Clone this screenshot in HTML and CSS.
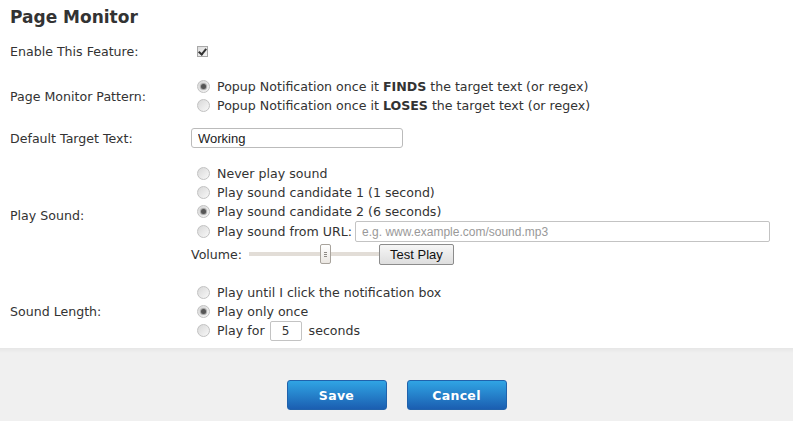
FILE: index.html
```html
<!DOCTYPE html>
<html lang="en">
<head>
<meta charset="UTF-8">
<title>Page Monitor</title>
<link rel="stylesheet" href="styles.css">
</head>
<body>

<div class="page">
    <h1>Page Monitor</h1>

    <div class="options">
        <div class="row">
            <div class="label">Enable This Feature:</div>
            <div class="control">
                <input type="checkbox" class="check" checked>
            </div>
        </div>

        <div class="row">
            <div class="label">Page Monitor Pattern:</div>
            <div class="control">
                <label class="line"><input type="radio" name="pattern" checked>Popup Notification once it <b>FINDS</b> the target text (or regex)</label>
                <label class="line"><input type="radio" name="pattern">Popup Notification once it <b>LOSES</b> the target text (or regex)</label>
            </div>
        </div>

        <div class="row row-tight">
            <div class="label">Default Target Text:</div>
            <div class="control">
                <input type="text" class="target" value="Working">
            </div>
        </div>

        <div class="row row-sound">
            <div class="label">Play Sound:</div>
            <div class="control">
                <label class="line"><input type="radio" name="sound">Never play sound</label>
                <label class="line"><input type="radio" name="sound">Play sound candidate 1 (1 second)</label>
                <label class="line"><input type="radio" name="sound" checked>Play sound candidate 2 (6 seconds)</label>
                <label class="line line-url"><input type="radio" name="sound">Play sound from URL:<input type="text" class="url" placeholder="e.g. www.example.com/sound.mp3"></label>
                <div class="volume">
                    Volume:
                    <input type="range" class="slider" min="0" max="100" value="60">
                    <button type="button" class="test">Test Play</button>
                </div>
            </div>
        </div>

        <div class="row row-last">
            <div class="label">Sound Length:</div>
            <div class="control">
                <label class="line"><input type="radio" name="length">Play until I click the notification box</label>
                <label class="line"><input type="radio" name="length" checked>Play only once</label>
                <label class="line"><input type="radio" name="length">Play for <input type="text" class="secs" value="5"> seconds</label>
            </div>
        </div>
    </div>
</div>

<div class="footer">
    <button type="button" class="blue">Save</button>
    <button type="button" class="blue">Cancel</button>
</div>

</body>
</html>
```

FILE: styles.css
```css
body {
    margin: 0;
    font-family: "DejaVu Sans", Verdana, sans-serif;
    font-size: 12.6px;
    color: #333;
    background-color: #fff;
}

.page {
    padding: 7px 10px 0 10px;
}

h1 {
    font-size: 17px;
    line-height: 21px;
    margin: 0 0 7px 0;
    color: #333;
}

.row {
    display: grid;
    grid-template-columns: 181px 1fr;
    align-items: center;
    padding: 9px 0;
}

.row-tight {
    padding: 4px 0 7px 0;
}

.row-sound {
    padding-bottom: 8px;
}

.row-last {
    padding-bottom: 8px;
}

.control {
    display: flex;
    flex-direction: column;
    align-items: flex-start;
}

.line {
    display: flex;
    align-items: center;
    height: 19px;
    white-space: pre;
}

.line-url {
    height: 21px;
}

/* radio and checkbox look */
input[type="radio"] {
    appearance: none;
    width: 13px;
    height: 13px;
    margin: 0 7px 0 6px;
    border: 1px solid #c2c2c2;
    border-radius: 50%;
    background: linear-gradient(135deg, #d8d8d8, #f8f8f8);
    box-sizing: border-box;
    position: relative;
    flex: none;
}

input[type="radio"]:checked::after {
    content: "";
    position: absolute;
    left: 3px;
    top: 3px;
    width: 5px;
    height: 5px;
    border-radius: 50%;
    background: #555;
    box-shadow: 0 0 1px 1px #a0a0a0;
}

.check {
    appearance: none;
    width: 11px;
    height: 11px;
    margin: 0 0 0 6px;
    border: 1px solid #a8a8a8;
    background: linear-gradient(135deg, #dcdcdc, #f4f4f4);
    position: relative;
    display: block;
}

.check:checked::after {
    content: "";
    position: absolute;
    left: 2px;
    top: 0px;
    width: 3px;
    height: 6px;
    border: solid #333;
    border-width: 0 2px 2px 0;
    transform: rotate(40deg);
}

.target {
    width: 212px;
    height: 20px;
    box-sizing: border-box;
    border: 1px solid #bbb;
    border-radius: 3px;
    padding: 0 6px;
    font-family: "Liberation Sans", Arial, sans-serif;
    font-size: 13px;
    color: #222;
}

.url {
    width: 415px;
    height: 21px;
    box-sizing: border-box;
    margin-left: 3px;
    border: 1px solid #c3c3c3;
    border-radius: 2px;
    padding: 0 6px;
    font-family: "Liberation Sans", Arial, sans-serif;
    font-size: 12px;
}

.url::placeholder {
    color: #999;
}

.secs {
    width: 32px;
    height: 20px;
    box-sizing: border-box;
    margin: 0 3px 0 1px;
    border: 1px solid #c3c3c3;
    border-radius: 2px;
    text-align: center;
    font-family: "DejaVu Sans", Verdana, sans-serif;
    font-size: 12px;
    color: #333;
}

.volume {
    display: flex;
    align-items: center;
    height: 24px;
}

.slider {
    appearance: none;
    width: 130px;
    height: 20px;
    margin: 0 0 0 7px;
    background: transparent;
}

.slider::-webkit-slider-runnable-track {
    height: 4px;
    background: #e2ddd7;
}

.slider::-webkit-slider-thumb {
    appearance: none;
    width: 11px;
    height: 20px;
    margin-top: -8px;
    border: 1px solid #a8a39c;
    border-radius: 2px;
    box-sizing: border-box;
    background:
        linear-gradient(#8e8a85, #8e8a85) 3px 7px / 3px 1px no-repeat,
        linear-gradient(#8e8a85, #8e8a85) 3px 9px / 3px 1px no-repeat,
        linear-gradient(#8e8a85, #8e8a85) 3px 11px / 3px 1px no-repeat,
        linear-gradient(#ffffff, #ebe7e2);
}

.test {
    height: 21px;
    padding: 0 10px;
    border: 1px solid #8c8c8c;
    border-radius: 2px;
    background: linear-gradient(#f6f6f6, #dedede);
    font-family: "Liberation Sans", Arial, sans-serif;
    font-size: 13px;
    color: #111;
}

.footer {
    height: 73px;
    background: linear-gradient(#e6e6e6, #f0f0f0 5px);
    display: flex;
    justify-content: center;
    align-items: flex-start;
    gap: 20px;
    padding-top: 32px;
    box-sizing: border-box;
}

.blue {
    width: 100px;
    height: 30px;
    border: 1px solid #2062ac;
    border-radius: 3px;
    background: linear-gradient(#30a4e4, #1b5eb1);
    color: #fff;
    font-family: "DejaVu Sans", Verdana, sans-serif;
    font-weight: bold;
    font-size: 12.5px;
    letter-spacing: 0.3px;
}
```
